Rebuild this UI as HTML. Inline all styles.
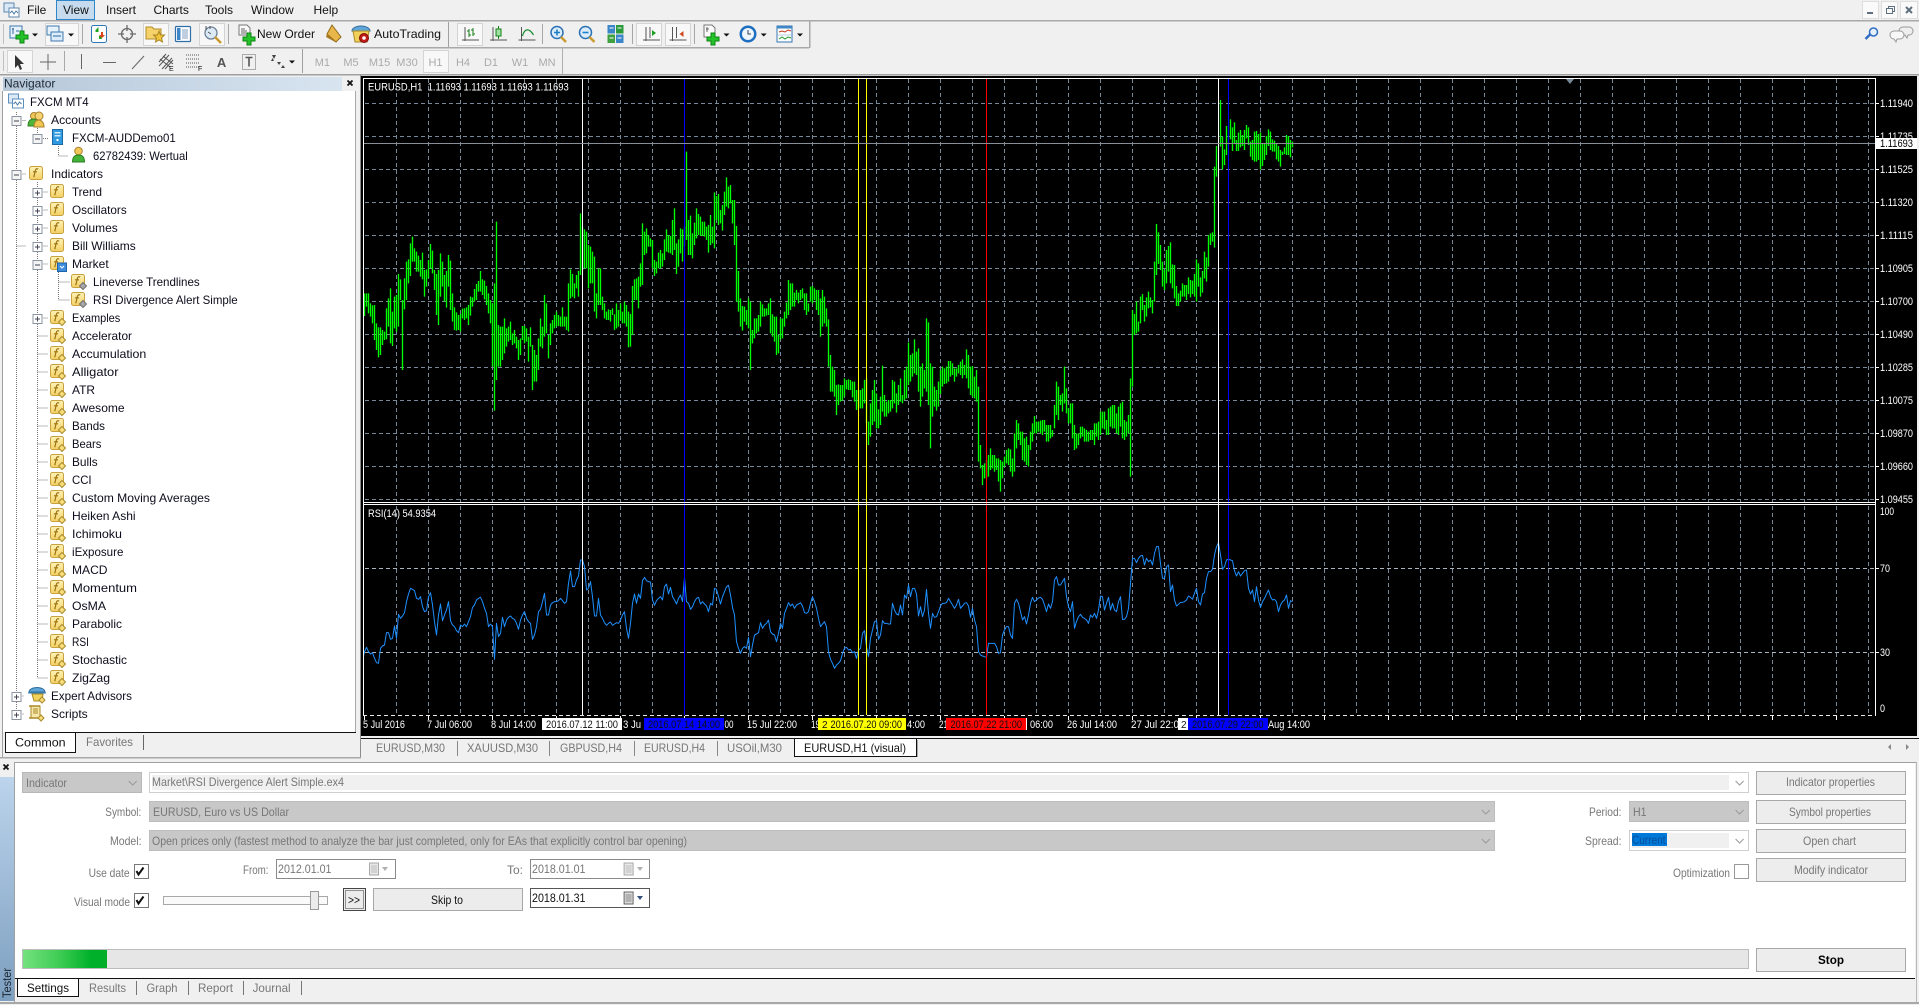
<!DOCTYPE html>
<html><head><meta charset="utf-8"><title>FXCM MT4</title>
<style>
html,body{margin:0;padding:0;background:#f0f0f0;width:1919px;height:1005px;overflow:hidden}
svg{display:block}
text{font-family:"Liberation Sans",sans-serif;font-size:12px;fill:#111;white-space:pre}
.g text,text.g{fill:#777}
.ch text{font-size:11px;fill:#fff}
.tf text{fill:#aaa;font-size:11px;text-anchor:middle}
.nav text{fill:#0c0c1c}
.c{shape-rendering:crispEdges}
</style></head><body>
<svg width="1919" height="1005" viewBox="0 0 1919 1005" xmlns="http://www.w3.org/2000/svg">
<defs>
<linearGradient id="gf" x1="0" y1="0" x2="0" y2="1"><stop offset="0" stop-color="#fff3b8"/><stop offset="1" stop-color="#f3cf63"/></linearGradient>
<linearGradient id="gh" x1="0" y1="0" x2="1" y2="0"><stop offset="0" stop-color="#b6c7d8"/><stop offset="1" stop-color="#d8e5f1"/></linearGradient>
<linearGradient id="gt" x1="0" y1="0" x2="0" y2="1"><stop offset="0" stop-color="#bcd4ec"/><stop offset="1" stop-color="#7d9fc0"/></linearGradient>
<linearGradient id="gp" x1="0" y1="0" x2="1" y2="0"><stop offset="0" stop-color="#74e27e"/><stop offset=".45" stop-color="#3ccb52"/><stop offset=".8" stop-color="#00b12c"/><stop offset="1" stop-color="#00ad28"/></linearGradient>
<pattern id="pv" x="12" y="79" width="32" height="7" patternUnits="userSpaceOnUse"><rect width="1" height="4" fill="#778899" class="c"/></pattern>
<pattern id="ph" x="365" y="103" width="7" height="33" patternUnits="userSpaceOnUse"><rect width="4" height="1" fill="#778899" class="c"/></pattern>
<g id="f"><rect x="-6.5" y="-6.5" width="13" height="13" rx="2" fill="url(#gf)" stroke="#c9a23e"/><path d="M2.2-4c-2-.8-2.6.2-3 2l-1.4 6.2M-3-1.2h4" fill="none" stroke="#9a7412" stroke-width="1.2"/></g>
<g id="fd"><use href="#f"/><path d="M5 1.5L8.5 5 5 8.5 1.5 5z" fill="#f8dc7a" stroke="#a98a2a"/></g>
<g id="fg"><use href="#f"/><path d="M5 1.5L8.5 5 5 8.5 1.5 5z" fill="#a8a8a8" stroke="#707070"/></g>
<g id="pl"><rect x="-4.5" y="-4.5" width="9" height="9" fill="#fff" stroke="#8a94a0" class="c"/><path d="M-2.5 0H2.5M0-2.5V2.5" stroke="#445" class="c"/></g>
<g id="mi"><rect x="-4.5" y="-4.5" width="9" height="9" fill="#f4f4f4" stroke="#8a94a0" class="c"/><path d="M-2.5 0H2.5" stroke="#445" class="c"/></g>
<g id="plus"><path d="M-2-6h4v4h4v4h-4v4h-4v-4h-4v-4h4z" fill="#26c22a" stroke="#0c8412"/></g>
<path id="arw" d="M-3-1.5h6L0 1.5z" fill="#111"/>
<path id="chev" d="M-4-2L0 2 4-2" fill="none" stroke="#9a9a9a"/>
<g id="cal"><rect x="-4.5" y="-6" width="9" height="12" fill="#e8e8e8" stroke="#a8a8a8"/><path d="M-3-3h6M-3-1h6M-3 1h6M-3 3h6" stroke="#bbb"/></g>
<g id="axes"><path d="M-5-7V7M-8 6H9" stroke="#555" fill="none"/></g>
</defs>

<rect width="1919" height="1005" fill="#f0f0f0"/>

<!-- MENU -->
<g class="c">
<rect x="56.5" y=".5" width="38" height="19" fill="#c6dcee" stroke="#2f86c9"/>
<rect x="0" y="20" width="1919" height="1.5" fill="#a9a9a9"/>
<rect x="0" y="47" width="809" height="1.5" fill="#a9a9a9"/>
<rect x="809" y="21" width="1.5" height="27" fill="#a9a9a9"/>
<rect x="0" y="74" width="1919" height="1.5" fill="#a0a0a0"/>
<rect x="562" y="48" width="1" height="26" fill="#b0b0b0"/>
<rect x="448" y="22" width="1" height="25" fill="#a0a0a0"/>
<rect x="302" y="49" width="1" height="24" fill="#a0a0a0"/>
<rect x="3" y="24" width="1" height="20" fill="#c0c0c0"/>
<rect x="3" y="51" width="1" height="20" fill="#c0c0c0"/>
</g>
<g transform="translate(12 10)"><rect x="-8" y="-7" width="10" height="9" fill="#dbe9f6" stroke="#5d86ad"/><rect x="-3" y="-2" width="10" height="9" fill="#fff" stroke="#5d86ad"/><path d="M-2 3l2-2 2 3 2-3 2 2" fill="none" stroke="#4a7ba8"/></g>
<text x="27" y="14">File</text><text x="63" y="14">View</text><text x="106" y="14">Insert</text><text x="153.500" y="14">Charts</text><text x="205" y="14">Tools</text><text x="251" y="14">Window</text><text x="313.500" y="14">Help</text>

<!-- window buttons -->
<g class="c" fill="#fafafa" stroke="#dedede"><rect x="1862.500" y="1.500" width="16" height="17"/><rect x="1881.500" y="1.500" width="16" height="17"/><rect x="1900.500" y="1.500" width="17" height="17"/></g>
<path d="M1867 13h6" stroke="#5f6f80" stroke-width="2"/>
<path d="M1886.500 8.500h6v5h-6zM1888.500 8.500v-2h6v5h-2" fill="none" stroke="#5f6f80"/>
<path d="M1906 7l6 6M1912 7l-6 6" stroke="#5f6f80" stroke-width="2"/>
<g transform="translate(1871.500 34)"><circle cx="2" cy="-2" r="4" fill="#e6f0fb" stroke="#2f6cc4" stroke-width="1.500"/><path d="M-1-0L-6 5" stroke="#2f6cc4" stroke-width="2.500"/></g>
<g transform="translate(1902 34)" fill="#efefef" stroke="#9a9a9a"><path d="M1-7h6a4 4 0 0 1 0 8h-1l-1 3-2-3h-2a4 4 0 0 1 0-8z"/><path d="M-8-3h6a4 4 0 0 1 0 8h-3l-1 3-2-3a4 4 0 0 1 0-8z" fill="#f8f8f8"/></g>

<!-- TOOLBAR 1 -->
<g class="c" fill="#f8f8f8" stroke="#d4d4d4"><rect x="45.500" y="23.500" width="33" height="22"/><rect x="143.500" y="23.500" width="25" height="22"/><rect x="199.500" y="23.500" width="25" height="22"/><rect x="457.500" y="23.500" width="25" height="22"/><rect x="636.500" y="23.500" width="25" height="22"/><rect x="665.500" y="23.500" width="25" height="22"/><rect x="7.500" y="50.500" width="25" height="22"/><rect x="423.500" y="50.500" width="25" height="22"/></g>
<g class="c" fill="#a8a8a8"><rect x="82" y="24" width="1" height="20"/><rect x="228" y="24" width="1" height="20"/><rect x="542" y="24" width="1" height="20"/><rect x="632" y="24" width="1" height="20"/><rect x="694" y="24" width="1" height="20"/><rect x="64" y="51" width="1" height="20"/></g>

<g transform="translate(18 34)"><rect x="-8" y="-8" width="12" height="12" fill="#e6f2fc" stroke="#3f78ad"/><path d="M-6-5h2M-5-6v6M-2-3h3" stroke="#356a9a"/><use href="#plus" transform="translate(4 3)"/></g>
<use href="#arw" x="35" y="35"/>
<g transform="translate(55 34)"><rect x="-8" y="-8" width="12" height="9" fill="#e6f2fc" stroke="#3f78ad"/><rect x="-4" y="-2" width="12" height="9" fill="#dcecfa" stroke="#3f78ad"/><path d="M-2 2h8" stroke="#2d6aa0"/></g>
<use href="#arw" x="71" y="35"/>
<g transform="translate(99 34)"><rect x="-7.500" y="-8.500" width="15" height="17" rx="2" fill="#fdfdfd" stroke="#2f78b8"/><path d="M-3.500-4l3-3v2h0v3h-3zM3 5l-3 0 0-3 2 0z" fill="#1ea51e"/><path d="M2 -2h2v3h2l-3 3-3-3h2z" fill="#d9421a"/></g>
<g transform="translate(127 34)" fill="none" stroke="#6a6a6a" stroke-width="1.300"><circle r="5.500"/><path d="M0-9v6M0 3v6M-9 0h6M3 0h6"/></g>
<g transform="translate(155 34)"><path d="M-9-7h6l2 2h7v10h-15z" fill="#f5d36a" stroke="#b48d2a"/><path d="M4-3l1.500 4h4l-3 3 1 4-3.500-2-3.500 2 1-4-3-3h4z" fill="#f2c53a" stroke="#a98422"/></g>
<g transform="translate(183 34)"><rect x="-7.500" y="-7.500" width="15" height="15" rx="1" fill="#fff" stroke="#2f6ea8" stroke-width="1.200"/><rect x="-6" y="-6" width="3.500" height="12" fill="#3f86c7"/><path d="M-1-4h6M-1-2h6M-1 0h6M-1 2h6M-1 4h6" stroke="#7f9fbf"/></g>
<g transform="translate(212 34)"><circle cx="-1" cy="-1" r="6" fill="#dceaf6" stroke="#6d8096" stroke-width="1.300"/><path d="M3 3l6 6" stroke="#c99a2e" stroke-width="2.500"/><path d="M-6-8v4M-2-8v3M-4-2l3 2" stroke="#556"/></g>
<g transform="translate(246 34)"><path d="M-7-9h8l3 3v7h-11z" fill="#fafafa" stroke="#777"/><path d="M-5-5h4M-5-3h6M-5-1h6" stroke="#666"/><use href="#plus" transform="translate(3 5)"/></g>
<text x="257" y="38">New Order</text>
<g transform="translate(334 34)"><path d="M-2-9L7 3 2 8-7 0z" fill="#e8b64a" stroke="#8f6a1a"/><path d="M-7 0l9 8 1 1-11-6z" fill="#a87a22"/></g>
<g transform="translate(361 34)"><path d="M-9-3a9 5 0 0 1 18 0z" fill="#5fa6d8" stroke="#336f9e"/><path d="M-8-3h16l-2 11h-12z" fill="#f2d15b" stroke="#a88826"/><circle cx="3" cy="4" r="4.500" fill="#c21b16" stroke="#7d0e0b"/><circle cx="3" cy="4" r="1.800" fill="#fff"/></g>
<text x="374" y="38" textLength="67" lengthAdjust="spacingAndGlyphs">AutoTrading</text>

<g transform="translate(470 34)"><use href="#axes"/><path d="M-1-5V3M-3-3h2M-1 1h2M3-6V2M1-4h2M3 0h2" stroke="#16801a" fill="none"/></g>
<g transform="translate(498 34)"><use href="#axes"/><rect x="-2" y="-5" width="5" height="7" fill="#9fe2a0" stroke="#16801a"/><path d="M.5-8v3M.5 2v3" stroke="#16801a"/></g>
<g transform="translate(526.500 34)"><use href="#axes"/><path d="M-4 2C-2-6 3-6 7 1" stroke="#128a2a" fill="none" stroke-width="1.200"/></g>
<g transform="translate(558 34)"><circle cx="-1" cy="-1.500" r="6" fill="#dcecfa" stroke="#2b72b5" stroke-width="1.500"/><path d="M-4-1.500h6M-1-4.500v6" stroke="#1b7fc9" stroke-width="1.600"/><path d="M3 3l5 5" stroke="#c99a2e" stroke-width="2.500"/></g>
<g transform="translate(586.500 34)"><circle cx="-1" cy="-1.500" r="6" fill="#dcecfa" stroke="#2b72b5" stroke-width="1.500"/><path d="M-4-1.500h6" stroke="#1b7fc9" stroke-width="1.600"/><path d="M3 3l5 5" stroke="#c99a2e" stroke-width="2.500"/></g>
<g transform="translate(615.500 34)" class="c"><rect x="-8" y="-9" width="7.500" height="8.500" fill="#3a86c8"/><rect x=".5" y="-9" width="7.500" height="8.500" fill="#2a9a3a"/><rect x="-8" y=".5" width="7.500" height="8.500" fill="#3fa040"/><rect x=".5" y=".5" width="7.500" height="8.500" fill="#3a86c8"/><path d="M-6-6h4M2-6h4M-6 4h4M2 4h4" stroke="#fff"/></g>
<g transform="translate(651 34)"><use href="#axes"/><path d="M-1-7V4" stroke="#555"/><path d="M1-4l4 3-4 3z" fill="#18a01c"/></g>
<g transform="translate(677.500 34)"><use href="#axes"/><path d="M-1-7V4" stroke="#555"/><path d="M6-3l-4 3 4 3z" fill="#d0491a"/></g>
<g transform="translate(711 34)"><path d="M-7-9h8l3 3v9h-11z" fill="#fafafa" stroke="#777"/><path d="M-5-5h3M-4-7v5" stroke="#666"/><use href="#plus" transform="translate(2 5)"/></g>
<use href="#arw" x="726.500" y="35"/>
<g transform="translate(748 34)"><circle r="8.500" fill="#1c6fc0"/><circle r="6" fill="#eef5fb"/><path d="M0-4v4h3" stroke="#345" fill="none"/></g>
<use href="#arw" x="763.700" y="35"/>
<g transform="translate(785 34)"><rect x="-8" y="-8" width="15" height="16" fill="#fdfdfd" stroke="#3378b5"/><rect x="-8" y="-8" width="15" height="2.500" fill="#3f86c7"/><path d="M-6-2l3-1 3 1 3-2 3 1" stroke="#c23a1a" fill="none"/><path d="M-7 1h13" stroke="#b9cde0"/><path d="M-6 5l3-2 3 2 3-2 3 1" stroke="#1f9a2a" fill="none"/></g>
<use href="#arw" x="800" y="35"/>

<!-- TOOLBAR 2 -->
<path d="M15 55v13l3-3 2 5 2-1-2-5h4z" fill="#333"/>
<path d="M48 54v16M40 62h16" stroke="#666" stroke-width="1"/>
<path d="M81.500 54v15M103 62.500h13" stroke="#666" fill="none" class="c"/>
<path d="M132 69L144 56" stroke="#666" fill="none"/>
<g transform="translate(166 62)" stroke="#555" fill="none"><path d="M-7 4L3-7M-4 7L6-4M-7 0L0-8M-1 7L7-2M-6-3l10 8M-3-6l10 8"/></g>
<text x="169" y="71" style="font-size:7px">E</text>
<g transform="translate(194 62)" stroke="#555" stroke-dasharray="1 1"><path d="M-8-7H6M-8-3H6M-8 1H6M-8 5H6"/></g>
<text x="198" y="71" style="font-size:7px">F</text>
<text x="221.600" y="67" text-anchor="middle" style="font-size:13px;fill:#555;font-weight:bold">A</text>
<g transform="translate(249 62)"><rect x="-6.500" y="-7.500" width="13" height="15" fill="none" stroke="#666" stroke-dasharray="1 1"/><path d="M-3.500-4.500h7M0-4.500v9" stroke="#555" stroke-width="1.600"/></g>
<g transform="translate(278 62)" fill="#444"><path d="M-6-7L-2-7-4-3zM-7-1h3l-1.500-3z"/><path d="M-1 0h4l-2 3zM3 6h4l-2-3z"/></g>
<use href="#arw" x="292" y="62"/>
<g class="tf"><text x="322.400" y="66">M1</text><text x="351" y="66">M5</text><text x="379.600" y="66">M15</text><text x="407" y="66">M30</text><text x="435.500" y="66">H1</text><text x="463" y="66">H4</text><text x="491" y="66">D1</text><text x="520" y="66">W1</text><text x="547" y="66">MN</text></g>

<!-- NAVIGATOR -->
<rect x="3" y="77" width="339" height="14" fill="url(#gh)" class="c"/>
<text x="4" y="87.500" style="fill:#202a36">Navigator</text>
<path d="M347.500 80.500l5 5M352.500 80.500l-5 5" stroke="#111" stroke-width="1.800"/>
<rect x="3" y="91" width="352" height="641" fill="#fff" class="c"/>
<rect x="2" y="91" width="1" height="666" fill="#a0a0a0" class="c"/>
<rect x="355" y="91" width="1" height="641" fill="#a8a8a8" class="c"/>
<rect x="360" y="75" width="1" height="683" fill="#8c8c8c" class="c"/>
<rect x="0" y="757" width="361" height="1.500" fill="#a8a8a8" class="c"/>
<rect x="5" y="732" width="351" height="1" fill="#111" class="c"/>
<rect x="5.500" y="732.500" width="70" height="20" fill="#fff" stroke="#111" class="c"/>
<text x="15" y="746.500" textLength="50.600" lengthAdjust="spacingAndGlyphs">Common</text>
<text x="86" y="746" textLength="47" lengthAdjust="spacingAndGlyphs" style="fill:#777">Favorites</text>
<rect x="143" y="735" width="1" height="15" fill="#666" class="c"/>

<g stroke="#777" stroke-dasharray="1 1" fill="none" class="c">
<path d="M16.500 112V714M16.500 714H24M16.500 696H24M16.500 120.500H26M16.500 246H26"/>
<path d="M16.500 174H26"/>
<path d="M37.500 128V138.500H48M58.500 146V156H68"/>
<path d="M37.500 182V678M37.500 192H48M37.500 210H48M37.500 228H48M37.500 246H48M37.500 264H48M37.500 318H48M37.500 336H48M37.500 354H48M37.500 372H48M37.500 390H48M37.500 408H48M37.500 426H48M37.500 444H48M37.500 462H48M37.500 480H48M37.500 498H48M37.500 516H48M37.500 534H48M37.500 552H48M37.500 570H48M37.500 588H48M37.500 606H48M37.500 624H48M37.500 642H48M37.500 660H48M37.500 678H48"/>
<path d="M58.500 272V300H70M58.500 282H70"/>
</g>
<g transform="translate(15.500 101)"><rect x="-7" y="-7" width="10" height="9" fill="#dbe9f6" stroke="#5d8fbd"/><rect x="-3" y="-2" width="11" height="9" fill="#fff" stroke="#5d8fbd"/><path d="M-2 3l2-2 2 3 2-3 2 2" fill="none" stroke="#4a7ba8"/></g>
<g transform="translate(36 119)"><circle cx="-2" cy="-3" r="3.500" fill="#f2c75a" stroke="#a8802a"/><path d="M-8 7c0-6 3-7 6-7s5 2 5 7z" fill="#4fb53a" stroke="#2f7e22"/><circle cx="3" cy="-3" r="4" fill="#f5d272" stroke="#a8802a"/><path d="M-2 8c0-6 3-7 5-7s5 2 5 7z" fill="#f0c552" stroke="#a8802a"/></g>
<g transform="translate(57.500 137)"><rect x="-5" y="-7.500" width="10" height="15" fill="#2f9adf" stroke="#1a6aa8"/><rect x="-3" y="-5" width="6" height="1.500" fill="#cfe9fa"/><rect x="-3" y="-2" width="6" height="1.500" fill="#cfe9fa"/><rect x="-1" y="2" width="2" height="2" fill="#fff"/></g>
<g transform="translate(78.500 155)"><circle cy="-4" r="3.800" fill="#f2c75a" stroke="#a8802a"/><path d="M-6 7c0-6 3-7 6-7s6 1 6 7z" fill="#42b238" stroke="#2a7d20"/></g>

<use href="#mi" x="16.500" y="121"/><use href="#mi" x="37.500" y="139"/><use href="#mi" x="16.500" y="175"/><use href="#pl" x="37.500" y="193"/><use href="#pl" x="37.500" y="211"/><use href="#pl" x="37.500" y="229"/><use href="#pl" x="37.500" y="247"/><use href="#mi" x="37.500" y="265"/><use href="#pl" x="37.500" y="319"/><use href="#pl" x="16.500" y="697"/><use href="#pl" x="16.500" y="715"/>

<use href="#f" x="36" y="173"/>
<use href="#f" x="57" y="191"/><use href="#f" x="57" y="209"/><use href="#f" x="57" y="227"/><use href="#f" x="57" y="245"/><use href="#f" x="57" y="263"/>
<g transform="translate(62 267)"><rect x="-4.500" y="-4" width="9" height="8.500" fill="#3f8ede" stroke="#1e62a8"/><path d="M-2-1l2 2 2-2" stroke="#fff" fill="none"/></g>
<use href="#fg" x="78" y="281"/><use href="#fg" x="78" y="299"/>
<use href="#fd" x="57" y="317"/><use href="#fd" x="57" y="335"/><use href="#fd" x="57" y="353"/><use href="#fd" x="57" y="371"/><use href="#fd" x="57" y="389"/><use href="#fd" x="57" y="407"/><use href="#fd" x="57" y="425"/><use href="#fd" x="57" y="443"/><use href="#fd" x="57" y="461"/><use href="#fd" x="57" y="479"/><use href="#fd" x="57" y="497"/><use href="#fd" x="57" y="515"/><use href="#fd" x="57" y="533"/><use href="#fd" x="57" y="551"/><use href="#fd" x="57" y="569"/><use href="#fd" x="57" y="587"/><use href="#fd" x="57" y="605"/><use href="#fd" x="57" y="623"/><use href="#fd" x="57" y="641"/><use href="#fd" x="57" y="659"/><use href="#fd" x="57" y="677"/>
<g transform="translate(37 695)"><path d="M-8-3a8 4.500 0 0 1 16 0z" fill="#5fa6d8" stroke="#336f9e"/><path d="M-9-2h18" stroke="#3a80b5"/><path d="M-5-1h11l-1 7h-8z" fill="#f2d15b" stroke="#a88826"/><path d="M5 2l3 3-3 3-3-3z" fill="#f8dc7a" stroke="#a98a2a"/></g>
<g transform="translate(36 713)"><path d="M-5-7h9v12h-9z" fill="#f7e7ac" stroke="#a88826"/><path d="M-7-7h11M-7 5h11" stroke="#a88826" stroke-width="1.600"/><path d="M-3-4h5M-3-2h5M-3 0h5" stroke="#a88826"/><path d="M5 2l3 3-3 3-3-3z" fill="#f8dc7a" stroke="#a98a2a"/></g>

<g class="nav">
<text x="30" y="106" textLength="58.700" lengthAdjust="spacingAndGlyphs">FXCM MT4</text>
<text x="51" y="124" textLength="50" lengthAdjust="spacingAndGlyphs">Accounts</text>
<text x="72" y="142" textLength="103.700" lengthAdjust="spacingAndGlyphs">FXCM-AUDDemo01</text>
<text x="93" y="160" textLength="94.700" lengthAdjust="spacingAndGlyphs">62782439: Wertual</text>
<text x="51" y="178" textLength="52" lengthAdjust="spacingAndGlyphs">Indicators</text>
<text x="72" y="196" textLength="30" lengthAdjust="spacingAndGlyphs">Trend</text>
<text x="72" y="214" textLength="54.700" lengthAdjust="spacingAndGlyphs">Oscillators</text>
<text x="72" y="232" textLength="45.700" lengthAdjust="spacingAndGlyphs">Volumes</text>
<text x="72" y="250" textLength="63.700" lengthAdjust="spacingAndGlyphs">Bill Williams</text>
<text x="72" y="268" textLength="36.700" lengthAdjust="spacingAndGlyphs">Market</text>
<text x="93" y="286" textLength="106.700" lengthAdjust="spacingAndGlyphs">Lineverse Trendlines</text>
<text x="93" y="304" textLength="144.700" lengthAdjust="spacingAndGlyphs">RSI Divergence Alert Simple</text>
<text x="72" y="322" textLength="48.300" lengthAdjust="spacingAndGlyphs">Examples</text>
<text x="72" y="340" textLength="60" lengthAdjust="spacingAndGlyphs">Accelerator</text>
<text x="72" y="358" textLength="74.300" lengthAdjust="spacingAndGlyphs">Accumulation</text>
<text x="72" y="376" textLength="46.500" lengthAdjust="spacingAndGlyphs">Alligator</text>
<text x="72" y="394" textLength="23" lengthAdjust="spacingAndGlyphs">ATR</text>
<text x="72" y="412" textLength="52.600" lengthAdjust="spacingAndGlyphs">Awesome</text>
<text x="72" y="430" textLength="33" lengthAdjust="spacingAndGlyphs">Bands</text>
<text x="72" y="448" textLength="29.400" lengthAdjust="spacingAndGlyphs">Bears</text>
<text x="72" y="466" textLength="25.700" lengthAdjust="spacingAndGlyphs">Bulls</text>
<text x="72" y="484" textLength="19.600" lengthAdjust="spacingAndGlyphs">CCI</text>
<text x="72" y="502" textLength="138" lengthAdjust="spacingAndGlyphs">Custom Moving Averages</text>
<text x="72" y="520" textLength="63.600" lengthAdjust="spacingAndGlyphs">Heiken Ashi</text>
<text x="72" y="538" textLength="50" lengthAdjust="spacingAndGlyphs">Ichimoku</text>
<text x="72" y="556" textLength="51.400" lengthAdjust="spacingAndGlyphs">iExposure</text>
<text x="72" y="574" textLength="35.500" lengthAdjust="spacingAndGlyphs">MACD</text>
<text x="72" y="592" textLength="65" lengthAdjust="spacingAndGlyphs">Momentum</text>
<text x="72" y="610" textLength="34" lengthAdjust="spacingAndGlyphs">OsMA</text>
<text x="72" y="628" textLength="50" lengthAdjust="spacingAndGlyphs">Parabolic</text>
<text x="72" y="646" textLength="17" lengthAdjust="spacingAndGlyphs">RSI</text>
<text x="72" y="664" textLength="55" lengthAdjust="spacingAndGlyphs">Stochastic</text>
<text x="72" y="682" textLength="38" lengthAdjust="spacingAndGlyphs">ZigZag</text>
<text x="51" y="700" textLength="81" lengthAdjust="spacingAndGlyphs">Expert Advisors</text>
<text x="51" y="718" textLength="36.700" lengthAdjust="spacingAndGlyphs">Scripts</text>
</g>

<!-- CHART -->
<rect x="361" y="76" width="1556" height="660" fill="#000" class="c"/>
<rect x="365" y="79" width="1510" height="423" fill="url(#pv)" class="c"/>
<rect x="365" y="505" width="1510" height="210" fill="url(#pv)" class="c"/>
<rect x="365" y="103" width="1510" height="397" fill="url(#ph)" class="c"/>
<path d="M365 568.500H1875M365 652.500H1875" stroke="#aab4be" stroke-dasharray="4 3" class="c"/>

<g stroke="#0f0" stroke-width="4" fill="none">
<path transform="translate(360.170 70) scale(.33333)" d="M13 670V738M19 670V710M25 670V730M31 700V740M37 706V760M43 705V810M49 760V840M55 772V862M61 772V855M67 780V825M73 785V810M79 715V808M85 685V770M91 655V820M97 725V828M103 680V775M109 675V785M115 612V770M121 628V690M127 690V900M133 625V718M139 575V690M145 568V640M151 520V618M157 500V575M163 535V575M169 545V605M175 557V605M181 570V620M187 548V628M193 600V680M199 598V650M205 570V625M211 522V595M217 542V610M223 600V660M229 612V735M235 600V765M241 550V680M247 575V650M253 615V695M259 603V713M265 555V650M271 572V720M277 670V755M283 712V780M289 727V782M295 735V780M301 732V785M307 716V745M313 715V750M319 712V745M325 705V765M331 680V737M337 682V710M343 657V695M349 642V690M355 633V665M361 603V665M367 628V675M373 632V688M379 648V705M385 670V730M391 690V760M397 700V890M403 640V1022M409 455V930M415 765V890M421 770V890M427 770V870M433 745V850M439 775V830M445 770V815M451 755V810M457 790V825M463 780V820M469 800V835M475 810V870M481 805V855M487 768V810M493 768V820M499 775V815M505 800V875M511 772V830M517 825V960M523 840V935M529 855V935M535 805V900M541 745V830M547 770V835M553 675V800M559 700V790M565 795V865M571 760V825M577 750V790M583 735V775M589 725V770M595 735V768M601 740V770M607 712V770M613 740V770M619 740V780M625 640V785M631 598V685M637 612V680M643 640V685M649 615V655M655 603V680M661 430V615M667 470V600M673 478V595M679 485V595M685 525V655M691 530V640M697 545V640M703 560V725M709 670V745M715 595V705M721 595V705M727 680V720M733 700V745M739 725V750M745 718V750M751 720V755M757 715V735M763 733V780M769 700V775M775 720V770M781 700V750M787 725V760M793 695V760M799 705V770M805 725V832M811 732V830M817 648V795M823 628V690M829 625V690M835 620V715M841 580V650M847 460V645M853 485V555M859 475V550M865 495V530M871 505V530M877 510V595M883 570V618M889 575V610M895 548V595M901 540V595M907 550V590M913 508V570M919 478V545M925 495V548M931 498V550M937 450V555M943 415V540M949 520V612M955 508V590M961 475V550M967 478V575M973 470V530M979 245V510M985 450V555M991 437V555M997 490V565M1003 458V525M1009 415V505M1015 432V495M1021 440V498M1027 455V498M1033 455V500M1039 470V510M1045 465V548M1051 435V525M1057 470V520M1063 367V535M1069 378V450M1075 372V465M1081 420V460M1087 405V482M1093 365V435M1099 322V410M1105 350V415M1111 345V400M1117 390V460M1123 390V525M1129 468V695M1135 603V725M1141 685V770M1147 708V782M1153 710V755M1159 720V765M1165 685V775M1171 695V900M1177 780V820M1183 745V805M1189 745V790M1195 735V785M1201 695V770M1207 703V740M1213 715V740M1219 715V737M1225 700V735M1231 685V790M1237 733V800M1243 740V815M1249 740V855M1255 795V850M1261 745V808M1267 745V805M1273 725V770M1279 698V745M1285 630V735M1291 640V720M1297 640V710M1303 668V710M1309 660V690M1315 668V700M1321 660V690M1327 655V685M1333 670V720M1339 670V735M1345 700V725M1351 650V695M1357 648V700M1363 655V690M1369 660V720M1375 660V735M1381 685V800M1387 660V770M1393 680V760M1399 715V770M1405 748V890M1411 855V965M1417 890V965M1423 900V980M1429 945V1035M1435 943V1005M1441 945V995M1447 945V992M1453 925V980M1459 930V958M1465 928V960M1471 930V960M1477 935V982M1483 935V995M1489 960V1020M1495 960V1015"/>
<path transform="translate(860.170 70) scale(.33333)" d="M1 960V1015M7 955V1015M13 930V1000M19 925V1060M25 1055V1125M31 1000V1100M37 960V1065M43 930V1055M49 970V1075M55 1018V1075M61 980V1065M67 887V1025M73 975V1040M79 995V1040M85 990V1030M91 990V1025M97 930V1015M103 935V1000M109 970V1028M115 945V1005M121 925V995M127 975V1000M133 900V990M139 890V985M145 818V945M151 855V935M157 850V920M163 808V910M169 845V915M175 835V965M181 890V1010M187 880V980M193 900V955M199 745V965M205 757V1005M211 880V1135M217 890V1040M223 950V1010M229 960V1022M235 935V1010M241 900V972M247 890V950M253 895V942M259 890V940M265 873V935M271 873V920M277 880V915M283 895V935M289 895V920M295 885V910M301 875V915M307 868V925M313 885V915M319 838V925M325 855V955M331 890V975M337 888V980M343 920V985M349 900V995M355 950V1175M361 1125V1195M367 1185V1245M373 1180V1225M379 1170V1225M385 1155V1220M391 1135V1200M397 1155V1195M403 1155V1205M409 1165V1200M415 1165V1235M421 1170V1265M427 1175V1225M433 1160V1190M439 1140V1180M445 1135V1185M451 1138V1205M457 1165V1220M463 1090V1205M469 1050V1135M475 1060V1110M481 1085V1125M487 1085V1170M493 1105V1175M499 1100V1185M505 1125V1190M511 1085V1140M517 1060V1115M523 1038V1090M529 1055V1090M535 1055V1085M541 1052V1090M547 1050V1095M553 1050V1085M559 1065V1115M565 1065V1115M571 1065V1105M577 1080V1100M583 1005V1075M589 935V1035M595 950V1050M601 975V1005M607 970V1025M613 890V1000M619 955V1030M625 1015V1060M631 1000V1060M637 1000V1105M643 1065V1140M649 1090V1135M655 1090V1125M661 1070V1105M667 1070V1100M673 1075V1115M679 1080V1115M685 1085V1115M691 1080V1110M697 1080V1110M703 1060V1125M709 1060V1100M715 1055V1110M721 1025V1095M727 1025V1075M733 1025V1078M739 1050V1095M745 1015V1095M751 1010V1070M757 1005V1075M763 1005V1075M769 1030V1090M775 1010V1095M781 1000V1070M787 995V1105M793 1050V1110M799 1055V1100M805 1035V1090M811 925V1220M817 720V950M823 732V795M829 695V790M835 755V785M841 680V760M847 672V720M853 705V755M859 682V740M865 665V715M871 682V712M877 690V730M883 575V695M889 462V615M895 487V582M901 525V600M907 575V650M913 600V660M919 540V640M925 528V605M931 517V640M937 583V655M943 585V685M949 648V708M955 670V708M961 662V695M967 640V680M973 645V680M979 645V690M985 622V672M991 630V682M997 632V672M1003 612V680M1009 568V695M1015 580V650M1021 622V680M1027 603V668M1033 545V625M1039 562V635M1045 495V590M1051 490V525M1057 487V515M1063 290V533M1069 228V320M1081 90V230M1087 200V298M1093 238V285M1099 168V255M1111 148V208M1117 172V243M1123 157V220M1129 210V243M1135 188V243M1141 180V232M1147 195V228M1153 180V240M1159 165V205M1165 172V225M1171 215V260M1177 210V270M1183 185V275M1189 183V275M1195 192V270M1201 187V298M1207 220V288M1213 222V270M1219 198V255M1225 178V228M1231 185V240M1237 208V245M1243 212V245M1249 222V268M1255 228V275M1261 240V290M1267 245V255M1273 232V252M1279 195V255M1285 198V255M1291 210V262M1297 215V232"/>
</g>

<g fill="none" stroke="#1e90ff" stroke-width="3" stroke-linejoin="round">
<polyline transform="translate(360.170 370) scale(.33333)" points="10,858 13,845 19,832 25,845 31,852 37,848 43,865 49,878 55,880 61,835 67,828 73,825 79,788 85,788 91,808 97,805 103,768 109,805 115,733 121,745 127,738 133,728 139,695 145,672 151,655 157,658 163,662 169,685 175,688 181,680 187,710 193,725 199,722 205,680 211,668 217,705 223,755 229,795 235,735 241,702 247,752 253,735 259,720 265,695 271,752 277,765 283,770 289,782 295,788 301,765 307,770 313,762 319,770 325,755 331,740 337,712 343,705 349,690 355,685 361,682 367,695 373,715 379,730 385,770 391,762 397,770 403,868 409,760 415,800 421,790 427,742 433,770 439,750 445,742 451,738 457,745 463,748 469,760 475,778 481,750 487,735 493,725 499,745 505,755 511,760 517,808 523,795 529,770 535,725 541,718 547,695 553,670 559,735 565,735 571,705 577,698 583,695 589,695 595,692 601,685 607,692 613,700 619,695 625,640 631,603 637,650 643,650 649,630 655,618 661,570 667,570 673,590 679,660 685,655 691,635 697,680 703,738 709,738 715,685 721,735 727,745 733,758 739,766 745,760 751,756 757,766 763,762 769,758 775,760 781,750 787,735 793,725 799,775 805,805 811,760 817,700 823,672 829,700 835,672 841,685 847,632 853,622 859,632 865,635 871,636 877,690 883,706 889,692 895,685 901,680 907,690 913,650 919,642 925,672 931,652 937,680 943,690 949,702 955,685 961,675 967,695 973,622 979,695 985,700 991,718 997,710 1003,695 1009,685 1015,682 1021,702 1027,695 1033,702 1039,708 1045,725 1051,700 1057,705 1063,655 1069,658 1075,680 1081,702 1087,680 1093,665 1099,650 1105,646 1111,675 1117,712 1123,735 1129,815 1135,835 1141,850 1147,835 1153,830 1159,835 1165,802 1171,860 1177,825 1183,795 1189,792 1195,788 1201,758 1207,775 1213,765 1219,760 1225,750 1231,785 1237,792 1243,795 1249,815 1255,790 1261,760 1267,775 1273,730 1279,715 1285,698 1291,708 1297,702 1303,715 1309,705 1315,702 1321,698 1327,708 1333,728 1339,730 1345,725 1351,700 1357,680 1363,695 1369,715 1375,745 1381,770 1387,762 1393,755 1399,770 1405,845 1411,868 1417,880 1423,895 1429,885 1435,880 1441,872 1447,850 1453,835 1459,832 1465,840 1471,838 1477,848 1483,845 1489,865 1495,840"/>
<polyline transform="translate(860.170 370) scale(.33333)" points="-5,840 1,835 7,790 13,782 19,830 25,860 31,805 37,780 43,755 49,752 55,808 61,795 67,752 73,760 79,760 85,762 91,762 97,700 103,720 109,732 115,735 121,705 127,735 133,675 139,685 145,645 151,680 157,655 163,655 169,672 175,738 181,710 187,740 193,720 199,658 205,730 211,775 217,730 223,742 229,740 235,725 241,708 247,700 253,700 259,698 265,685 271,695 277,705 283,715 289,705 295,688 301,715 307,708 313,700 319,698 325,708 331,742 337,715 343,750 349,770 355,845 361,855 367,858 373,860 379,862 385,820 391,820 397,820 403,820 409,830 415,850 421,848 427,795 433,780 439,770 445,770 451,795 457,805 463,700 469,688 475,700 481,725 487,750 493,740 499,762 505,735 511,700 517,682 523,695 529,690 535,684 541,682 547,688 553,705 559,725 565,702 571,715 577,695 583,630 589,620 595,645 601,645 607,635 613,625 619,680 625,710 631,725 637,695 643,775 649,755 655,740 661,733 667,742 673,745 679,750 685,760 691,735 697,742 703,730 709,745 715,720 721,678 727,680 733,720 739,700 745,682 751,720 757,700 763,720 769,725 775,695 781,680 787,748 793,748 799,740 805,715 811,640 817,565 823,565 829,578 835,565 841,558 847,556 853,585 859,565 865,575 871,570 877,585 883,550 889,530 895,530 901,580 907,625 913,625 919,590 925,585 931,665 937,645 943,690 949,708 955,703 961,697 967,697 973,695 979,690 985,678 991,682 997,688 1003,670 1009,655 1015,695 1021,705 1027,672 1033,668 1039,625 1045,605 1051,605 1057,598 1063,555 1069,530 1075,518 1081,555 1087,598 1093,590 1099,570 1105,568 1111,570 1117,572 1123,602 1129,618 1135,605 1141,618 1147,610 1153,602 1159,600 1165,655 1171,672 1177,660 1183,695 1189,650 1195,690 1201,712 1207,695 1213,685 1219,672 1225,660 1231,680 1237,690 1243,688 1249,695 1255,725 1261,705 1267,695 1273,690 1279,675 1285,715 1291,692 1297,695"/>
</g>

<!-- marker lines -->
<g class="c">
<rect x="582" y="78" width="1" height="637" fill="#fff"/>
<rect x="684" y="78" width="1" height="637" fill="#00f"/>
<rect x="858" y="78" width="1" height="637" fill="#ff0"/>
<rect x="866" y="78" width="1" height="637" fill="#ff0"/>
<rect x="986" y="78" width="1" height="637" fill="#f00"/>
<rect x="1218" y="78" width="1" height="637" fill="#fff"/>
<rect x="1228" y="78" width="1" height="637" fill="#00f"/>
<rect x="363" y="143" width="1512" height="1" fill="#888e94"/>
<rect x="363" y="78" width="1513" height="1" fill="#fff"/>
<rect x="363" y="78" width="1" height="638" fill="#fff"/>
<rect x="1875" y="78" width="1" height="638" fill="#fff"/>
<rect x="363" y="502" width="1513" height="1" fill="#fff"/>
<rect x="363" y="504" width="1513" height="1" fill="#fff"/>
</g>
<path d="M363 715.500H1876" stroke="#e8e8e8" stroke-dasharray="4 3" class="c"/>
<path d="M1566 79h8l-4 5z" fill="#778899"/>

<!-- axis ticks -->
<path class="c" stroke="#fff" d="M1876 103.500h3M1876 136.500h3M1876 169.500h3M1876 202.500h3M1876 235.500h3M1876 268.500h3M1876 301.500h3M1876 334.500h3M1876 367.500h3M1876 400.500h3M1876 433.500h3M1876 466.500h3M1876 499.500h3M1876 568.500h3M1876 652.500h3M364.500 716v4M428.500 716v4M492.500 716v4M556.500 716v4M620.500 716v4M684.500 716v4M748.500 716v4M812.500 716v4M876.500 716v4M940.500 716v4M1004.500 716v4M1068.500 716v4M1132.500 716v4M1196.500 716v4M1260.500 716v4M1324.500 716v4M1388.500 716v4M1452.500 716v4M1516.500 716v4M1580.500 716v4M1644.500 716v4M1708.500 716v4M1772.500 716v4M1836.500 716v4"/>

<g class="ch">
<text x="368" y="90.500" textLength="200.700" lengthAdjust="spacingAndGlyphs">EURUSD,H1  1.11693 1.11693 1.11693 1.11693</text>
<text x="368" y="517" textLength="68" lengthAdjust="spacingAndGlyphs">RSI(14) 54.9354</text>
<text x="1880" y="107" textLength="33" lengthAdjust="spacingAndGlyphs">1.11940</text>
<text x="1880" y="140" textLength="33" lengthAdjust="spacingAndGlyphs">1.11735</text>
<text x="1880" y="173" textLength="33" lengthAdjust="spacingAndGlyphs">1.11525</text>
<text x="1880" y="206" textLength="33" lengthAdjust="spacingAndGlyphs">1.11320</text>
<text x="1880" y="239" textLength="33" lengthAdjust="spacingAndGlyphs">1.11115</text>
<text x="1880" y="272" textLength="33" lengthAdjust="spacingAndGlyphs">1.10905</text>
<text x="1880" y="305" textLength="33" lengthAdjust="spacingAndGlyphs">1.10700</text>
<text x="1880" y="338" textLength="33" lengthAdjust="spacingAndGlyphs">1.10490</text>
<text x="1880" y="371" textLength="33" lengthAdjust="spacingAndGlyphs">1.10285</text>
<text x="1880" y="404" textLength="33" lengthAdjust="spacingAndGlyphs">1.10075</text>
<text x="1880" y="437" textLength="33" lengthAdjust="spacingAndGlyphs">1.09870</text>
<text x="1880" y="470" textLength="33" lengthAdjust="spacingAndGlyphs">1.09660</text>
<text x="1880" y="503" textLength="33" lengthAdjust="spacingAndGlyphs">1.09455</text>
<text x="1880" y="515" textLength="14" lengthAdjust="spacingAndGlyphs">100</text>
<text x="1880" y="572" textLength="10" lengthAdjust="spacingAndGlyphs">70</text>
<text x="1880" y="656" textLength="10" lengthAdjust="spacingAndGlyphs">30</text>
<text x="1880" y="712" textLength="5" lengthAdjust="spacingAndGlyphs">0</text>
</g>
<rect x="1876" y="138" width="41" height="11" fill="#fff" class="c"/>
<text x="1880" y="147" textLength="33" lengthAdjust="spacingAndGlyphs" style="font-size:11px;fill:#000">1.11693</text>

<!-- time axis -->
<g class="ch">
<text x="363" y="728" textLength="42" lengthAdjust="spacingAndGlyphs">5 Jul 2016</text>
<text x="427" y="728" textLength="45" lengthAdjust="spacingAndGlyphs">7 Jul 06:00</text>
<text x="491" y="728" textLength="45" lengthAdjust="spacingAndGlyphs">8 Jul 14:00</text>
<text x="623" y="728" textLength="18" lengthAdjust="spacingAndGlyphs">3 Ju</text>
<text x="724.500" y="728" textLength="9" lengthAdjust="spacingAndGlyphs">00</text>
<text x="747" y="728" textLength="50" lengthAdjust="spacingAndGlyphs">15 Jul 22:00</text>
<text x="811" y="728" textLength="9" lengthAdjust="spacingAndGlyphs">19</text>
<text x="907" y="728" textLength="18" lengthAdjust="spacingAndGlyphs">4:00</text>
<text x="939" y="728" textLength="9" lengthAdjust="spacingAndGlyphs">21</text>
<text x="1030" y="728" textLength="23" lengthAdjust="spacingAndGlyphs">06:00</text>
<text x="1067" y="728" textLength="50" lengthAdjust="spacingAndGlyphs">26 Jul 14:00</text>
<text x="1131" y="728" textLength="48" lengthAdjust="spacingAndGlyphs">27 Jul 22:0</text>
<text x="1268" y="728" textLength="42" lengthAdjust="spacingAndGlyphs">Aug 14:00</text>
</g>
<g class="c"><rect x="542" y="718" width="80" height="12" fill="#fff"/><rect x="644" y="718" width="80" height="12" fill="#00f"/><rect x="818" y="718" width="88" height="12" fill="#ff0"/><rect x="946" y="718" width="80" height="12" fill="#f00"/><rect x="1026" y="718" width="1" height="12" fill="#fff"/><rect x="1178" y="718" width="10" height="12" fill="#fff"/><rect x="1188" y="718" width="80" height="12" fill="#00f"/></g>
<g style="fill:#000">
<text x="546" y="728" textLength="72" lengthAdjust="spacingAndGlyphs" style="font-size:11px">2016.07.12 11:00</text>
<text x="648" y="728" textLength="72" lengthAdjust="spacingAndGlyphs" style="font-size:11px">2016.07.14 14:00</text>
<text x="822" y="728" style="font-size:10px">2</text>
<text x="830.500" y="728" textLength="71.500" lengthAdjust="spacingAndGlyphs" style="font-size:11px">2016.07.20 09:00</text>
<text x="950.500" y="728" textLength="71.500" lengthAdjust="spacingAndGlyphs" style="font-size:11px">2016.07.22 21:00</text>
<text x="1181" y="728" style="font-size:10px">2</text>
<text x="1192" y="728" textLength="71.500" lengthAdjust="spacingAndGlyphs" style="font-size:11px">2016.07.29 22:00</text>
</g>

<!-- CHART TABS -->
<rect x="361" y="738" width="1558" height="1" fill="#111" class="c"/>
<rect x="794.500" y="738.500" width="122" height="18" fill="#fff" stroke="#111" class="c"/>
<rect x="917" y="740" width="1" height="17" fill="#a8a8a8" class="c"/>
<g class="g">
<text x="376" y="752" textLength="69" lengthAdjust="spacingAndGlyphs">EURUSD,M30</text>
<text x="467" y="752" textLength="71" lengthAdjust="spacingAndGlyphs">XAUUSD,M30</text>
<text x="560" y="752" textLength="62" lengthAdjust="spacingAndGlyphs">GBPUSD,H4</text>
<text x="644" y="752" textLength="61" lengthAdjust="spacingAndGlyphs">EURUSD,H4</text>
<text x="727" y="752" textLength="55" lengthAdjust="spacingAndGlyphs">USOil,M30</text>
</g>
<text x="804" y="752" textLength="102" lengthAdjust="spacingAndGlyphs">EURUSD,H1 (visual)</text>
<path class="c" d="M457.500 741v15M549.500 741v15M634.500 741v15M717.500 741v15" stroke="#888"/>
<path d="M1891 744v6l-3-3zM1906 744v6l3-3z" fill="#888"/>

<!-- TESTER -->
<rect x="15" y="763" width="1900" height="215" fill="#fff" class="c"/>
<rect x="14" y="762" width="1902" height="1" fill="#a0a0a0" class="c"/>
<rect x="14" y="762" width="1" height="240" fill="#a0a0a0" class="c"/>
<rect x="1916" y="762" width="1" height="240" fill="#b8b8b8" class="c"/>
<rect x="0" y="777" width="14" height="224" fill="url(#gt)" class="c"/>
<path d="M3.500 764.500l5 5M8.500 764.500l-5 5" stroke="#111" stroke-width="1.800"/>
<text transform="translate(11 998) rotate(-90)" textLength="30" lengthAdjust="spacingAndGlyphs" style="fill:#1a2530">Tester</text>

<rect x="15" y="978" width="1900" height="1" fill="#111" class="c"/>
<rect x="0" y="1002" width="1919" height="2" fill="#a8a8a8" class="c"/>
<rect x="17.500" y="978.500" width="61" height="18" fill="#fff" stroke="#111" class="c"/>
<text x="27" y="992" textLength="42" lengthAdjust="spacingAndGlyphs">Settings</text>
<g class="g">
<text x="89" y="992" textLength="37" lengthAdjust="spacingAndGlyphs">Results</text>
<text x="146.500" y="992" textLength="31" lengthAdjust="spacingAndGlyphs">Graph</text>
<text x="198" y="992" textLength="35" lengthAdjust="spacingAndGlyphs">Report</text>
<text x="252.600" y="992" textLength="38" lengthAdjust="spacingAndGlyphs">Journal</text>
</g>
<path class="c" d="M136.500 981v14M188.500 981v14M243.500 981v14M301.500 981v14" stroke="#777"/>

<!-- form boxes -->
<g class="c">
<rect x="22.500" y="772.500" width="119" height="20" fill="#c8c8c8" stroke="#b8b8b8"/>
<rect x="149.500" y="772.500" width="1599" height="20" fill="#fff" stroke="#cfcfcf"/>
<rect x="152" y="775" width="1577" height="15" fill="#f0f0f0"/>
<rect x="149.500" y="801.500" width="1345" height="20" fill="#c8c8c8" stroke="#bdbdbd"/>
<rect x="149.500" y="830.500" width="1345" height="20" fill="#c8c8c8" stroke="#bdbdbd"/>
<rect x="1629.500" y="801.500" width="119" height="20" fill="#c8c8c8" stroke="#bdbdbd"/>
<rect x="1629.500" y="830.500" width="119" height="20" fill="#fff" stroke="#cfcfcf"/>
<rect x="1632" y="833" width="97" height="15" fill="#f0f0f0"/>
<rect x="1632" y="833" width="35" height="13" fill="#0078d7"/>
<rect x="134.500" y="864.500" width="14" height="14" fill="#fff" stroke="#777"/>
<rect x="134.500" y="893.500" width="14" height="14" fill="#fff" stroke="#777"/>
<rect x="1734.500" y="864.500" width="14" height="14" fill="#fff" stroke="#9a9a9a"/>
<rect x="276.500" y="859.500" width="119" height="19" fill="#fff" stroke="#8a8a8a"/>
<rect x="530.500" y="859.500" width="119" height="19" fill="#fff" stroke="#8a8a8a"/>
<rect x="530.500" y="888.500" width="119" height="19" fill="#fff" stroke="#555"/>
<rect x="163.500" y="896.500" width="164" height="8" fill="#fafafa" stroke="#a8a8a8"/>
<rect x="310.500" y="891.500" width="8" height="18" fill="#ececec" stroke="#9a9a9a"/>
<rect x="343.500" y="888.500" width="22" height="22" fill="#ececec" stroke="#444"/>
<rect x="345.500" y="890.500" width="18" height="18" fill="none" stroke="#333" stroke-dasharray="1 1"/>
<rect x="373.500" y="888.500" width="149" height="22" fill="#ececec" stroke="#a8a8a8"/>
<rect x="22.500" y="949.500" width="1726" height="19" fill="#e6e6e6" stroke="#bcbcbc"/>
<rect x="23" y="950" width="84" height="18" fill="url(#gp)"/>
<g fill="#ededed" stroke="#a8a8a8"><rect x="1756.500" y="771.500" width="149" height="23"/><rect x="1756.500" y="800.500" width="149" height="23"/><rect x="1756.500" y="829.500" width="149" height="23"/><rect x="1756.500" y="858.500" width="149" height="23"/><rect x="1756.500" y="948.500" width="149" height="23"/></g>
</g>
<use href="#chev" x="132.700" y="783"/><use href="#chev" x="1739.600" y="783"/><use href="#chev" x="1485.800" y="812"/><use href="#chev" x="1485.800" y="841"/><use href="#chev" x="1739.600" y="812"/><use href="#chev" x="1739.600" y="841"/>
<path d="M136.500 871l2 3.500 5-7" fill="none" stroke="#111" stroke-width="2"/>
<path d="M136.500 900l2 3.500 5-7" fill="none" stroke="#111" stroke-width="2"/>
<use href="#cal" x="374" y="869"/><path d="M382 867h6l-3 4z" fill="#b0b0b0"/>
<use href="#cal" x="628.600" y="869"/><path d="M637 867h6l-3 4z" fill="#b0b0b0"/>
<g transform="translate(628.600 898)"><rect x="-4.500" y="-6" width="9" height="12" fill="#dcdcdc" stroke="#666"/><path d="M-3-3h6M-3-1h6M-3 1h6M-3 3h6" stroke="#888"/></g><path d="M637 896h6l-3 4z" fill="#34507a"/>

<g class="g">
<text x="26" y="787" textLength="41" lengthAdjust="spacingAndGlyphs">Indicator</text>
<text x="152" y="786" textLength="192" lengthAdjust="spacingAndGlyphs">Market\RSI Divergence Alert Simple.ex4</text>
<text x="105.300" y="816" textLength="36" lengthAdjust="spacingAndGlyphs">Symbol:</text>
<text x="153" y="816" textLength="136" lengthAdjust="spacingAndGlyphs">EURUSD, Euro vs US Dollar</text>
<text x="110" y="845" textLength="31.500" lengthAdjust="spacingAndGlyphs">Model:</text>
<text x="152" y="845" textLength="535" lengthAdjust="spacingAndGlyphs">Open prices only (fastest method to analyze the bar just completed, only for EAs that explicitly control bar opening)</text>
<text x="88.600" y="877" textLength="41" lengthAdjust="spacingAndGlyphs">Use date</text>
<text x="74" y="906" textLength="56" lengthAdjust="spacingAndGlyphs">Visual mode</text>
<text x="243" y="874" textLength="25.500" lengthAdjust="spacingAndGlyphs">From:</text>
<text x="278" y="873" textLength="53.500" lengthAdjust="spacingAndGlyphs">2012.01.01</text>
<text x="507" y="874" textLength="16" lengthAdjust="spacingAndGlyphs">To:</text>
<text x="532" y="873" textLength="53.500" lengthAdjust="spacingAndGlyphs">2018.01.01</text>
<text x="1589" y="816" textLength="32.500" lengthAdjust="spacingAndGlyphs">Period:</text>
<text x="1633" y="816" textLength="13.500" lengthAdjust="spacingAndGlyphs">H1</text>
<text x="1585" y="845" textLength="36.500" lengthAdjust="spacingAndGlyphs">Spread:</text>
<text x="1673" y="877" textLength="57" lengthAdjust="spacingAndGlyphs">Optimization</text>
<text x="1786" y="786" textLength="89" lengthAdjust="spacingAndGlyphs">Indicator properties</text>
<text x="1789" y="816" textLength="82" lengthAdjust="spacingAndGlyphs">Symbol properties</text>
<text x="1803" y="845" textLength="53" lengthAdjust="spacingAndGlyphs">Open chart</text>
<text x="1794" y="874" textLength="74" lengthAdjust="spacingAndGlyphs">Modify indicator</text>
</g>
<text x="1632" y="844" textLength="33.500" lengthAdjust="spacingAndGlyphs" style="fill:#004f9a">Current</text>
<text x="348" y="904" textLength="12" lengthAdjust="spacingAndGlyphs">&gt;&gt;</text>
<text x="431" y="904" textLength="32" lengthAdjust="spacingAndGlyphs">Skip to</text>
<text x="532" y="902" textLength="53.500" lengthAdjust="spacingAndGlyphs">2018.01.31</text>
<text x="1818" y="964" textLength="26" lengthAdjust="spacingAndGlyphs" style="font-weight:bold;fill:#000">Stop</text>
</svg>
</body></html>
